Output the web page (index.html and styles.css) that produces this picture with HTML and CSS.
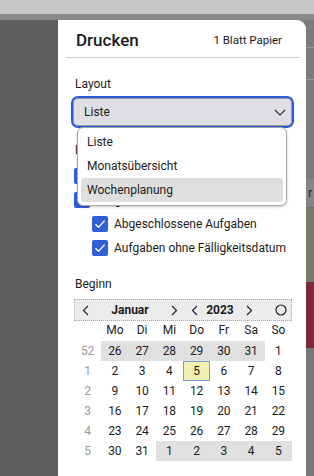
FILE: index.html
```html
<!DOCTYPE html>
<html lang="de">
<head>
<meta charset="utf-8">
<title>Drucken</title>
<link rel="stylesheet" href="styles.css">
</head>
<body>
<div class="app">
  <div class="titlebar"></div>
  <div class="toolbar"></div>
  <div class="main">
    <div class="sidebar"></div>
    <div class="content">
      <div class="band b1"></div>
      <div class="band b2"></div>
      <div class="band b3"></div>
      <div class="band b4"><span>r</span></div>
      <div class="band b5"></div>
      <div class="band b6"></div>
      <div class="band b7"></div>
    </div>
  </div>

  <div class="panel">
    <div class="panel-head">
      <h1 class="title">Drucken</h1>
      <span class="sheets">1 Blatt Papier</span>
    </div>
    <div class="panel-body">
      <div class="label">Layout</div>
      <div class="select">
        <span>Liste</span>
        <svg class="chev" width="12" height="7" viewBox="0 0 12 7"><path d="M1 1 L6 6 L11 1" fill="none" stroke="#333" stroke-width="1.2"/></svg>
      </div>

      <div class="label section">Drucken</div>
      <div class="check-row">
        <span class="box"><svg width="12" height="10" viewBox="0 0 12 10"><path d="M1.5 5.2 L4.6 8.3 L10.6 1.6" fill="none" stroke="#fff" stroke-width="1.3"/></svg></span>
        <span>Termine</span>
      </div>
      <div class="check-row">
        <span class="box"><svg width="12" height="10" viewBox="0 0 12 10"><path d="M1.5 5.2 L4.6 8.3 L10.6 1.6" fill="none" stroke="#fff" stroke-width="1.3"/></svg></span>
        <span>Aufgaben</span>
      </div>
      <div class="check-row sub">
        <span class="box"><svg width="12" height="10" viewBox="0 0 12 10"><path d="M1.5 5.2 L4.6 8.3 L10.6 1.6" fill="none" stroke="#fff" stroke-width="1.3"/></svg></span>
        <span>Abgeschlossene Aufgaben</span>
      </div>
      <div class="check-row sub">
        <span class="box"><svg width="12" height="10" viewBox="0 0 12 10"><path d="M1.5 5.2 L4.6 8.3 L10.6 1.6" fill="none" stroke="#fff" stroke-width="1.3"/></svg></span>
        <span>Aufgaben ohne Fälligkeitsdatum</span>
      </div>

      <div class="label begin">Beginn</div>
      <div class="cal">
        <div class="cal-head">
          <span class="nav w22"><svg width="7" height="11" viewBox="0 0 7 11"><path d="M6 1 L1.5 5.5 L6 10" fill="none" stroke="#222" stroke-width="1.2"/></svg></span>
          <span class="month">Januar</span>
          <span class="nav w22"><svg width="7" height="11" viewBox="0 0 7 11"><path d="M1 1 L5.5 5.5 L1 10" fill="none" stroke="#222" stroke-width="1.2"/></svg></span>
          <span class="nav w18"><svg width="7" height="11" viewBox="0 0 7 11"><path d="M6 1 L1.5 5.5 L6 10" fill="none" stroke="#222" stroke-width="1.2"/></svg></span>
          <span class="year">2023</span>
          <span class="nav w24"><svg width="7" height="11" viewBox="0 0 7 11"><path d="M1 1 L5.5 5.5 L1 10" fill="none" stroke="#222" stroke-width="1.2"/></svg></span>
          <span class="spacer"></span>
          <span class="nav w22"><svg width="12" height="12" viewBox="0 0 12 12"><circle cx="6" cy="6" r="5" fill="none" stroke="#222" stroke-width="1.2"/></svg></span>
        </div>
        <div class="cal-grid">
          <span></span><span class="wd">Mo</span><span class="wd">Di</span><span class="wd">Mi</span><span class="wd">Do</span><span class="wd">Fr</span><span class="wd">Sa</span><span class="wd">So</span>

          <span class="wk">52</span><span class="d o">26</span><span class="d o">27</span><span class="d o">28</span><span class="d o">29</span><span class="d o">30</span><span class="d o">31</span><span class="d">1</span>
          <span class="wk">1</span><span class="d">2</span><span class="d">3</span><span class="d">4</span><span class="d today">5</span><span class="d">6</span><span class="d">7</span><span class="d">8</span>
          <span class="wk">2</span><span class="d">9</span><span class="d">10</span><span class="d">11</span><span class="d">12</span><span class="d">13</span><span class="d">14</span><span class="d">15</span>
          <span class="wk">3</span><span class="d">16</span><span class="d">17</span><span class="d">18</span><span class="d">19</span><span class="d">20</span><span class="d">21</span><span class="d">22</span>
          <span class="wk">4</span><span class="d">23</span><span class="d">24</span><span class="d">25</span><span class="d">26</span><span class="d">27</span><span class="d">28</span><span class="d">29</span>
          <span class="wk">5</span><span class="d">30</span><span class="d">31</span><span class="d o">1</span><span class="d o">2</span><span class="d o">3</span><span class="d o">4</span><span class="d o">5</span>
        </div>
      </div>
    </div>

    <div class="menu">
      <div class="item">Liste</div>
      <div class="item">Monatsübersicht</div>
      <div class="item active">Wochenplanung</div>
    </div>
  </div>
</div>
</body>
</html>
```

FILE: styles.css
```css
* { box-sizing: border-box; }
html, body { margin: 0; padding: 0; }
body {
  width: 314px;
  height: 476px;
  overflow: hidden;
  font-family: Roboto, "Noto Sans", sans-serif;
  font-size: 12px;
  color: #1c1c1c;
}
.app {
  position: relative;
  width: 314px;
  height: 476px;
  display: flex;
  flex-direction: column;
  background: #616161;
}
.titlebar { height: 14px; background: #c8c8c8; flex: none; }
.toolbar { height: 6px; background: #8a8a8a; flex: none; }
.main { flex: 1; display: flex; }
.sidebar { width: 58px; background: #5f5f5f; flex: none; }
.content { flex: 1; display: flex; flex-direction: column; background: #7c7c7c; }
.band { flex: none; }
.b1 { height: 28px; border-bottom: 1px solid #969696; }
.b2 { height: 32px; border-bottom: 1px solid #969696; }
.b3 { height: 99px; }
.b4 { height: 29px; background: #858585; border-bottom: 1px solid #6f6f6f; color: #2a2a2a; font-size: 13px; line-height: 28px; padding-left: 250px; }
.b5 { height: 74px; background: #78786f; }
.b6 { height: 66px; background: #7a2a3a; }
.b7 { flex: 1; background: #777; }

.panel {
  position: absolute;
  left: 58px;
  top: 20px;
  width: 248px;
  bottom: 0;
  background: #fff;
  border-top-right-radius: 9px;
}
.panel-head {
  height: 38px;
  margin: 0 6px 0 8px;
  padding: 0 18px 0 10px;
  display: flex;
  align-items: center;
  justify-content: space-between;
  border-bottom: 1px solid #d2d2d2;
}
.title {
  margin: 2px 0 0;
  font-size: 17px;
  font-weight: 500;
  color: #1a1a1a;
}
.sheets { font-size: 11.5px; color: #1a1a1a; margin-top: 2px; }

.panel-body { padding: 0 14px 0 16px; white-space: nowrap; }
.label { height: 16px; line-height: 16px; margin-left: 1px; }
.panel-body > .label:first-child { margin-top: 18px; }
.select {
  margin: 4px -2px 0 -3px;
  height: 32px;
  border: 2px solid #2b5ad6;
  border-radius: 7px;
  background: #dfdee4;
  box-shadow: inset 0 0 0 1px #9a9aa4;
  display: flex;
  align-items: center;
  justify-content: space-between;
  padding: 0 6px 0 11px;
}
.chev { margin-top: 1px; }
.section { margin-top: 14px; }
.check-row {
  height: 24px;
  display: flex;
  align-items: center;
  gap: 6px;
}
.section + .check-row { margin-top: 6px; }
.check-row.sub { padding-left: 18px; }
.box {
  width: 16px;
  height: 16px;
  border-radius: 2px;
  background: #2f5ed8;
  display: flex;
  align-items: center;
  justify-content: center;
  flex: none;
}
.begin { margin-top: 16px; }

.cal { margin-top: 7px; width: 218px; }
.cal-head {
  height: 22px;
  background: #ececec;
  border: 1px dotted #a8a8a8;
  display: flex;
  align-items: center;
  font-weight: 700;
}
.nav { display: flex; justify-content: center; align-items: center; height: 100%; }
.w22 { width: 21px; }
.w18 { width: 18px; }
.w24 { width: 24px; }
.month { width: 68px; text-align: center; }
.year { width: 34px; text-align: center; }
.spacer { flex: 1; }

.cal-grid {
  display: grid;
  grid-template-columns: repeat(8, 1fr);
  grid-auto-rows: 20px;
  text-align: center;
  line-height: 20px;
}
.cal-grid > .wd { line-height: 19px; }
.wk { color: #9a9a9a; }
.d { color: #1c1c1c; }
.o { background: #e0e0e0; }
.today { background: #f3efb2; box-shadow: inset 0 0 0 1px #7d9dc6; }

.menu {
  position: absolute;
  left: 19px;
  top: 107px;
  width: 210px;
  height: 79px;
  background: #fff;
  border: 1px solid #a6a6a6;
  border-radius: 6px;
  box-shadow: 0 1px 3px rgba(0,0,0,0.2);
  padding: 2px 3px;
}
.item {
  height: 24px;
  line-height: 24px;
  padding-left: 6px;
  border-radius: 3px;
}
.item.active { background: #dfdfdf; }
```
